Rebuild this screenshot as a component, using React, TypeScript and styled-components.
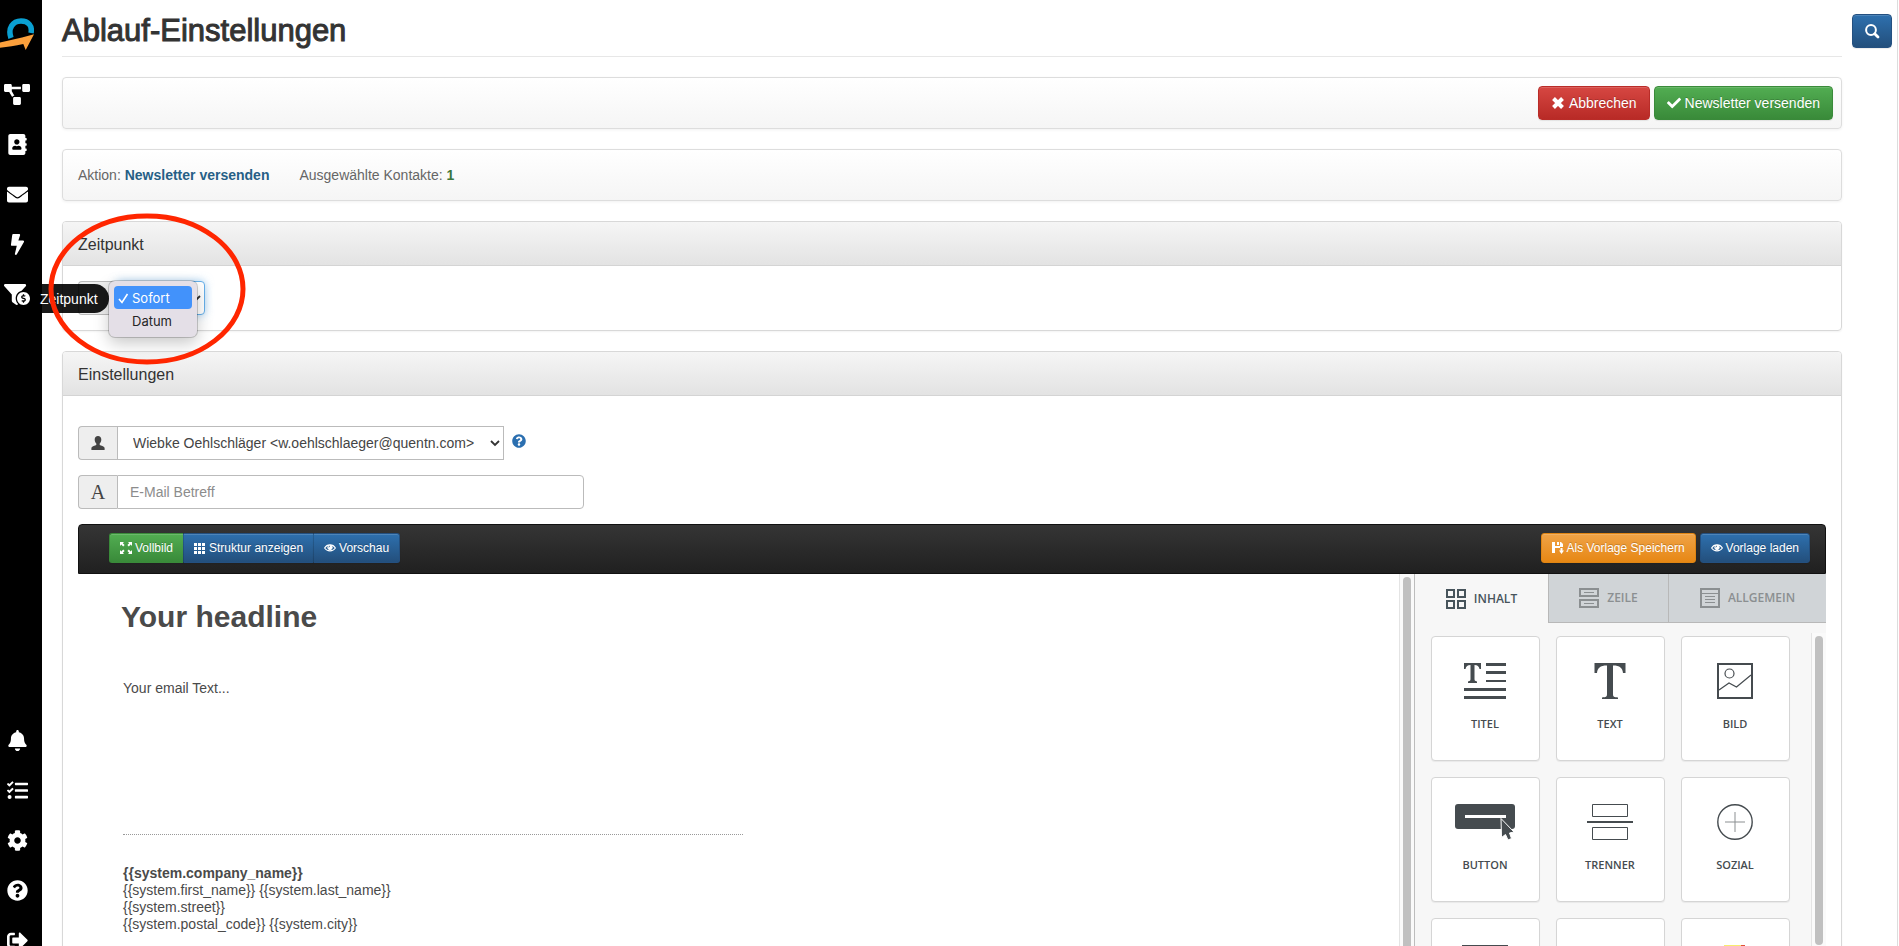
import React from 'react';
import styled, { createGlobalStyle, css } from 'styled-components';
import {
  FaAddressBook,
  FaBell,
  FaBolt,
  FaCheck,
  FaCog,
  FaEnvelope,
  FaFunnelDollar,
  FaProjectDiagram,
  FaQuestionCircle,
  FaSignOutAlt,
  FaTasks,
  FaTimes,
} from 'react-icons/fa';

const sans = `"Liberation Sans", Arial, Helvetica, sans-serif`;
const ink = '#454b4f';

const GlobalStyle = createGlobalStyle`
  *, *::before, *::after { box-sizing: border-box; }
  html, body { margin: 0; height: 100%; }
  body {
    background: #fff;
    color: #333;
    font: 14px/20px ${sans};
    overflow: hidden;
  }
  button, input, select { font: inherit; }
  h1, h2, p, ul { margin: 0; padding: 0; }
`;

/* ---------- page frame ---------- */

const Shell = styled.div`
  display: flex;
  height: 100vh;
  overflow: hidden;
`;

const Sidebar = styled.nav`
  flex: none;
  width: 42px;
  background: #000;
  display: flex;
  flex-direction: column;
`;

const SideGroup = styled.ul<{ $bottom?: boolean }>`
  list-style: none;
  flex: none;
  ${(p) => p.$bottom && 'margin-top: auto; margin-bottom: -19px;'}
`;

const SideLink = styled.a<{ $wide?: boolean }>`
  position: relative;
  display: flex;
  align-items: center;
  justify-content: center;
  width: 34px;
  height: 50px;
  color: #fff;
  svg { flex: none; display: block; width: ${(p) => (p.$wide ? 26 : 21)}px; height: 21px; }
`;

const Brand = styled.a`
  flex: none;
  display: block;
  height: 69px;
  padding-top: 17px;
  svg { display: block; }
`;

const Tooltip = styled.span`
  position: absolute;
  z-index: 3;
  left: 34px;
  top: 15px;
  height: 29px;
  padding: 0 11px 0 6px;
  border-radius: 0 15px 15px 0;
  background: rgba(0, 0, 0, 0.9);
  color: #fff;
  font-size: 14px;
  line-height: 30px;
`;

const Main = styled.main`
  flex: 1;
  min-width: 0;
  display: flex;
  align-items: flex-start;
  padding: 0 5px 0 20px;
  border-right: 1px solid #ddd;
  margin-right: 1px;
`;

const Column = styled.div`
  flex: 1;
  min-width: 0;
`;

const PageHeader = styled.header`
  height: 57px;
  padding-top: 13px;
  margin-bottom: 20px;
  border-bottom: 1px solid #e7e7e7;
`;

const Title = styled.h1`
  font-size: 31px;
  line-height: 36px;
  font-weight: 500;
  -webkit-text-stroke: 1px #333;
`;

const SearchSlot = styled.div`
  flex: none;
  padding: 14px 0 0 10px;
`;

/* ---------- buttons ---------- */

type Tone = 'red' | 'green' | 'blue' | 'orange';

/* gradient top, gradient bottom, border */
const tones: Record<Tone, [string, string, string]> = {
  red: ['#d64742', '#b82a26', '#b92c28'],
  green: ['#52ad52', '#398a39', '#3a8a3a'],
  blue: ['#2e70ae', '#234f7c', '#245080'],
  orange: ['#efa347', '#e78714', '#e08513'],
};

const Button = styled.button<{ $tone: Tone; $small?: boolean }>`
  display: inline-flex;
  align-items: center;
  justify-content: center;
  gap: ${(p) => (p.$small ? 3 : 4)}px;
  height: ${(p) => (p.$small ? 30 : 34)}px;
  padding: 0 ${(p) => (p.$small ? 10 : 12)}px;
  border: 1px solid ${(p) => tones[p.$tone][2]};
  border-radius: ${(p) => (p.$small ? 3 : 4)}px;
  background: linear-gradient(${(p) => tones[p.$tone][0]}, ${(p) => tones[p.$tone][1]});
  box-shadow: inset 0 1px 0 rgba(255, 255, 255, 0.15), 0 1px 1px rgba(0, 0, 0, 0.08);
  color: #fff;
  font-size: ${(p) => (p.$small ? 12 : 14)}px;
  text-shadow: 0 -1px 0 rgba(0, 0, 0, 0.2);
  white-space: nowrap;
  svg { flex: none; display: block; }
`;

const SearchButton = styled(Button)`
  width: 40px;
  padding: 0;
`;

const ButtonGroup = styled.div`
  display: flex;
  button:not(:first-child) { border-top-left-radius: 0; border-bottom-left-radius: 0; border-left-color: rgba(0, 0, 0, 0.15); }
  button:not(:last-child) { border-top-right-radius: 0; border-bottom-right-radius: 0; border-right-width: 0; }
`;

const ButtonRow = styled.div`
  display: flex;
  gap: 4px;
`;

/* ---------- panels ---------- */

const Bar = styled.div<{ $end?: boolean }>`
  display: flex;
  align-items: center;
  gap: 30px;
  height: 52px;
  padding: 0 ${(p) => (p.$end ? 8 : 15)}px;
  margin-bottom: 20px;
  justify-content: ${(p) => (p.$end ? 'flex-end' : 'flex-start')};
  border: 1px solid #ddd;
  border-radius: 4px;
  background: linear-gradient(#fff, #f5f5f5);
  box-shadow: 0 1px 3px rgba(0, 0, 0, 0.06);
  color: #666;
`;

const Strong = styled.strong<{ $green?: boolean }>`
  color: ${(p) => (p.$green ? '#3c763d' : '#265f86')};
`;

const Panel = styled.section`
  margin-bottom: 20px;
  border: 1px solid #d8d8d8;
  border-radius: 4px;
  box-shadow: 0 1px 2px rgba(0, 0, 0, 0.05);
`;

const PanelTitle = styled.h2`
  height: 44px;
  padding: 0 15px;
  border-bottom: 1px solid #d4d4d4;
  border-radius: 3px 3px 0 0;
  background: linear-gradient(#f5f5f5, #e3e3e3);
  font-size: 16px;
  font-weight: 400;
  line-height: 46px;
`;

const PanelBody = styled.div<{ $roomy?: boolean }>`
  padding: ${(p) => (p.$roomy ? '30px 15px 0' : '15px')};
`;

/* ---------- form ---------- */

const Field = styled.div<{ $width: number }>`
  position: relative;
  display: flex;
  width: ${(p) => p.$width}px;
  height: 34px;
`;

const FieldRow = styled.div`
  display: flex;
  gap: 8px;
  margin-bottom: 15px;
`;

const Addon = styled.label`
  flex: none;
  display: flex;
  align-items: center;
  justify-content: center;
  width: 39px;
  border: 1px solid #bbb;
  border-right: 0;
  border-radius: 4px 0 0 4px;
  background: #eee;
  color: #444;
`;

const control = css`
  flex: 1;
  min-width: 0;
  height: 34px;
  border: 1px solid #bbb;
  background: #fff;
  color: #444;
  outline: 0;
`;

const Select = styled.select<{ $focus?: boolean }>`
  ${control}
  appearance: none;
  padding: 0 15px;
  border-radius: 0;
  ${(p) =>
    p.$focus &&
    css`
      border-color: #66afe9;
      border-radius: 0 4px 4px 0;
      box-shadow: 0 0 8px rgba(102, 175, 233, 0.6);
    `}
`;

const Chevron = styled.svg`
  position: absolute;
  right: 4px;
  top: 14px;
  pointer-events: none;
`;

const Input = styled.input`
  ${control}
  padding: 0 12px;
  border-radius: 0 4px 4px 0;
  &::placeholder { color: #8c8c8c; opacity: 1; }
`;

const Letter = styled.span`
  font: 20px/20px "Liberation Serif", "Times New Roman", serif;
`;

const HelpLink = styled.a`
  color: #2b6fb0;
  padding-top: 8px;
  height: 22px;
  svg { display: block; }
`;

const Menu = styled.ul`
  position: absolute;
  z-index: 2;
  left: 31px;
  top: 0;
  width: 88px;
  padding: 5px;
  border-radius: 6px;
  list-style: none;
  background: #e4dfe7;
  box-shadow: 0 0 0 1px rgba(0, 0, 0, 0.18), 0 6px 16px rgba(0, 0, 0, 0.22);
`;

const MenuItem = styled.li<{ $active?: boolean }>`
  position: relative;
  height: 23px;
  padding-left: 18px;
  border-radius: 4px;
  font: 400 13px/24px Inter, ${sans};
  color: ${(p) => (p.$active ? '#fff' : '#262626')};
  background: ${(p) => (p.$active ? '#4292fb' : 'transparent')};
  svg { position: absolute; left: 4px; top: 7px; }
`;

const Marker = styled.svg`
  position: absolute;
  z-index: 4;
  left: -32px;
  top: -70px;
  pointer-events: none;
`;

/* ---------- mail editor ---------- */

const Toolbar = styled.div`
  display: flex;
  justify-content: space-between;
  align-items: flex-start;
  height: 50px;
  padding: 8px 15px 0 30px;
  border: 1px solid #111;
  border-radius: 4px 4px 0 0;
  background: linear-gradient(#353535, #202020);
`;

const Editor = styled.div`
  display: flex;
  height: 560px;
`;

const Canvas = styled.article`
  flex: 1;
  min-width: 0;
  padding: 0 43px 0 45px;
  color: #4a4a4a;
`;

const Headline = styled.h2`
  padding: 22px 0 0;
  margin-left: -2px;
  font-size: 30px;
  line-height: 42px;
  font-weight: 700;
`;

const MailText = styled.p`
  padding: 40px 0 136px;
`;

const Signature = styled.address`
  width: 620px;
  max-width: 100%;
  padding-top: 30px;
  border-top: 1px dotted #999;
  font-style: normal;
  line-height: 17px;
`;

const Track = styled.div<{ $wide?: boolean }>`
  flex: none;
  width: 15px;
  padding: 3px 0 0 3px;
  border-left: 1px solid #e4e4e4;
  background: #fafafa;
  &::before {
    content: '';
    display: block;
    width: 8px;
    height: ${(p) => (p.$wide ? 470 : 309)}px;
    border-radius: 4px;
    background: #c0c0c0;
  }
`;

const Tools = styled.aside`
  flex: none;
  width: 412px;
  border-left: 1px solid #bdbdbd;
  background: #f7f7f7;
  font-family: "Open Sans", "Noto Sans", sans-serif;
`;

const Tabs = styled.div`
  display: grid;
  grid-template-columns: 133px 120px 1fr;
  height: 49px;
`;

const Tab = styled.button<{ $active?: boolean }>`
  display: flex;
  align-items: center;
  justify-content: center;
  gap: 8px;
  padding: 0;
  border: 0;
  border-left: ${(p) => (p.$active ? 0 : '1px solid #b8b8b8')};
  border-bottom: ${(p) => (p.$active ? 0 : '1px solid #b8b8b8')};
  background: ${(p) => (p.$active ? '#f7f7f7' : '#d0d4d7')};
  color: ${(p) => (p.$active ? '#47545b' : '#8b8f91')};
  font-size: 12px;
  font-weight: 600;
`;

const ToolsBody = styled.div`
  display: flex;
  justify-content: space-between;
  padding-top: 10px;
  height: 511px;
`;

const Cards = styled.div`
  display: grid;
  grid-template-columns: repeat(3, 109px);
  grid-auto-rows: 125px;
  gap: 16px;
  padding: 3px 0 0 16px;
`;

const Card = styled.button`
  display: flex;
  flex-direction: column;
  align-items: center;
  padding: 25px 1px 0 0;
  border: 1px solid #d5d5d5;
  border-radius: 4px;
  background: #fff;
  box-shadow: 0 1px 1px rgba(0, 0, 0, 0.06);
  color: ${ink};
  font-size: 11px;
  line-height: 16px;
  font-weight: 600;
  svg { display: block; margin-bottom: 16px; }
`;

/* ---------- drawings ---------- */

const Logo = () => (
  <svg width="34" height="34" viewBox="0 0 34 34">
    <path d="M11 21C7.500 11 13 4 21 4C28.500 4 32.500 9 31 16" fill="none" stroke="#0aa0d2" strokeWidth="5.500" />
    <path d="M0 25.500L22 20.500L34 17.300L25.700 33L23.300 27C15 29 8 29.800 0 30.700Z" fill="#fba03c" />
  </svg>
);

const SearchIcon = () => (
  <svg width="16" height="16" viewBox="0 0 16 16" fill="none" stroke="#fff">
    <circle cx="7" cy="7" r="4.900" strokeWidth="2" />
    <path d="M10.700 10.700L14 14" strokeWidth="2.800" strokeLinecap="round" />
  </svg>
);

const UserIcon = () => (
  <svg width="14" height="14" viewBox="0 0 14 14" fill="currentColor">
    <path d="M7 0C9 0 10.300 1.300 10.300 3.600C10.300 5.300 9.700 6.700 8.700 7.500V9C10 9.800 13 10.300 13.600 11.700V14H.4V11.700C1 10.300 4 9.800 5.300 9V7.500C4.300 6.700 3.700 5.300 3.700 3.600C3.700 1.300 5 0 7 0Z" />
  </svg>
);

const CrossIcon = () => (
  <svg width="14" height="14" viewBox="0 0 14 14" fill="none" stroke="#fff" strokeWidth="4">
    <path d="M2.500 2.500L11.500 11.500M11.500 2.500L2.500 11.500" />
  </svg>
);

const FullscreenIcon = () => (
  <svg width="12" height="12" viewBox="0 0 12 12" fill="#fff">
    <path d="M0 0H4L2.800 1.200L4.600 3L3.200 4.400L1.300 2.600L0 4ZM12 0H8L9.200 1.200L7.400 3L8.800 4.400L10.700 2.600L12 4ZM0 12H4L2.800 10.800L4.600 9L3.200 7.600L1.300 9.400L0 8ZM12 12H8L9.200 10.800L7.400 9L8.800 7.600L10.700 9.400L12 8Z" />
  </svg>
);

const GridIcon = () => (
  <svg width="12" height="12" viewBox="0 0 12 12" fill="#fff">
    {[1, 5, 9].map((y) => [0, 4, 8].map((x) => <rect key={`${x}-${y}`} x={x} y={y} width="3" height="3" />))}
  </svg>
);

const EyeIcon = () => (
  <svg width="12" height="12" viewBox="0 0 12 12" fill="none" stroke="#fff">
    <path d="M.6 6C3 1.800 9 1.800 11.400 6C9 9.800 3 9.800 .6 6Z" strokeWidth="1.100" />
    <circle cx="6" cy="5.400" r="2.200" fill="#fff" />
    <path d="M4.800 5.400A1.300 1.300 0 0 1 6 4.100" stroke="#245580" strokeWidth=".8" />
  </svg>
);

const SaveIcon = () => (
  <svg width="12" height="12" viewBox="0 0 12 12" fill="#fff">
    <path fillRule="evenodd" d="M0 0H3V4H8V0H9L11 2V5H8V6H3V11H0ZM5 0H7V3H5Z" />
    <path d="M8.500 6H10.500V8.500H12L9.500 12L7 8.500H8.500Z" />
  </svg>
);

const ContentTabIcon = () => (
  <svg width="20" height="20" viewBox="0 0 20 20" fill="none" stroke="currentColor" strokeWidth="2">
    <path d="M1 1H8V8H1ZM12 1H19V8H12ZM1 12H8V19H1ZM12 12H19V19H12Z" />
  </svg>
);

const RowTabIcon = () => (
  <svg width="20" height="20" viewBox="0 0 20 20" fill="none" stroke="currentColor">
    <path d="M1 1H19V8H1ZM1 12H19V19H1Z" strokeWidth="2" />
    <path d="M5 4.500H15M5 15.500H15" />
  </svg>
);

const GeneralTabIcon = () => (
  <svg width="20" height="20" viewBox="0 0 20 20" fill="none" stroke="currentColor">
    <path d="M1 1H19V19H1Z" strokeWidth="2" />
    <path d="M1 5.500H19M5 8.500H15M5 11.500H15M5 14.500H15" />
  </svg>
);

const TitleArt = () => (
  <svg width="42" height="38" viewBox="0 0 42 38" fill={ink}>
    <path d="M0 1H17V7H15.500C15 4.500 13.500 3 10.500 3V17C10.500 18.500 11 19 13 19.500V21H4V19.500C6 19 6.500 18.500 6.500 17V3C3.500 3 2 4.500 1.500 7H0Z" />
    <path d="M22 1H42V4H22ZM22 9H42V12H22ZM22 18H42V20H22ZM0 26H42V29H0ZM0 34H42V37H0Z" />
  </svg>
);

const TextArt = () => (
  <svg width="32" height="38" viewBox="0 0 32 38" fill={ink}>
    <path d="M.5 1H31.500V11H29C28.500 6 26 3.500 19 3.500V32C19 35 20 35 24 35.500V37H8V35.500C12 35 13 35 13 32V3.500C6 3.500 3.500 6 3 11H.5Z" />
  </svg>
);

const ImageArt = () => (
  <svg width="36" height="38" viewBox="0 0 36 38" fill="none" stroke={ink}>
    <path d="M1 2H35V36H1Z" strokeWidth="2" />
    <circle cx="12.500" cy="11.500" r="4.500" strokeWidth="1.200" />
    <path d="M2 28L12 21L19.500 25L34 13" strokeWidth="1.200" />
  </svg>
);

const ButtonArt = () => (
  <svg width="60" height="38" viewBox="0 0 60 38">
    <rect y="1" width="60" height="25" rx="3" fill={ink} />
    <path d="M10 12H51V15H10Z" fill="#fff" />
    <path d="M46 15.500L59 29L54.500 30L56.500 35.500L53 37L50.500 31.500L46.500 34.500Z" fill={ink} stroke="#fff" strokeWidth="1" />
  </svg>
);

const DividerArt = () => (
  <svg width="46" height="38" viewBox="0 0 46 38" fill="none" stroke={ink}>
    <path d="M5.500 1.500H40.500V13.500H5.500ZM5.500 24.500H40.500V36.500H5.500Z" />
    <path d="M0 19H46" strokeWidth="2" />
  </svg>
);

const SocialArt = () => (
  <svg width="36" height="38" viewBox="0 0 36 38" fill="none" stroke={ink}>
    <circle cx="18" cy="19" r="17.200" strokeWidth="1.400" />
    <path d="M8 19H28M18 9V29" stroke="#8b8f91" />
  </svg>
);

const HtmlArt = () => (
  <svg width="46" height="38" viewBox="0 0 46 38" fill="none" stroke={ink} strokeWidth="2">
    <path d="M1 2H45V36H1ZM1 10H45" />
  </svg>
);

const BlankArt = () => <svg width="46" height="38" />;

const StickerArt = () => (
  <svg width="24" height="38" viewBox="0 0 24 38">
    <path d="M1 1H18V36H1Z" fill="#f7ec6e" />
    <path d="M18 1H22V8L18 6Z" fill="#e0503a" />
  </svg>
);

const SelectChevron = () => (
  <Chevron width="10" height="7" viewBox="0 0 10 7" fill="none" stroke="#333" strokeWidth="1.800">
    <path d="M1 1L5 5L9 1" />
  </Chevron>
);

/* ---------- data ---------- */

const topLinks = [
  { label: 'Kampagnen', icon: <FaProjectDiagram />, wide: true },
  { label: 'Kontakte', icon: <FaAddressBook /> },
  { label: 'E-Mails', icon: <FaEnvelope /> },
  { label: 'Aktionen', icon: <FaBolt /> },
  { label: 'Verkauf', icon: <FaFunnelDollar />, wide: true, tip: 'Zeitpunkt' },
];

const bottomLinks = [
  { label: 'Benachrichtigungen', icon: <FaBell /> },
  { label: 'Aufgaben', icon: <FaTasks /> },
  { label: 'Einstellungen', icon: <FaCog /> },
  { label: 'Hilfe', icon: <FaQuestionCircle /> },
  { label: 'Abmelden', icon: <FaSignOutAlt /> },
];

const cards = [
  { label: 'TITEL', art: <TitleArt /> },
  { label: 'TEXT', art: <TextArt /> },
  { label: 'BILD', art: <ImageArt /> },
  { label: 'BUTTON', art: <ButtonArt /> },
  { label: 'TRENNER', art: <DividerArt /> },
  { label: 'SOZIAL', art: <SocialArt /> },
  { label: '', art: <HtmlArt /> },
  { label: '', art: <BlankArt /> },
  { label: '', art: <StickerArt /> },
];

export default function App() {
  return (
    <>
      <GlobalStyle />
      <Shell>
        <Sidebar>
          <Brand href="#" aria-label="Startseite"><Logo /></Brand>
          <SideGroup>
            {topLinks.map((l) => (
              <li key={l.label}>
                <SideLink href="#" aria-label={l.label} $wide={l.wide}>
                  {l.icon}
                  {l.tip && <Tooltip>{l.tip}</Tooltip>}
                </SideLink>
              </li>
            ))}
          </SideGroup>
          <SideGroup $bottom>
            {bottomLinks.map((l) => (
              <li key={l.label}>
                <SideLink href="#" aria-label={l.label}>{l.icon}</SideLink>
              </li>
            ))}
          </SideGroup>
        </Sidebar>

        <Main>
          <Column>
            <PageHeader><Title>Ablauf-Einstellungen</Title></PageHeader>

            <Bar $end>
              <ButtonRow>
                <Button $tone="red"><CrossIcon />Abbrechen</Button>
                <Button $tone="green"><FaCheck size={14} />Newsletter versenden</Button>
              </ButtonRow>
            </Bar>

            <Bar>
              <span>Aktion: <Strong>Newsletter versenden</Strong></span>
              <span>Ausgewählte Kontakte: <Strong $green>1</Strong></span>
            </Bar>

            <Panel>
              <PanelTitle>Zeitpunkt</PanelTitle>
              <PanelBody>
                <Field $width={127}>
                  <Addon htmlFor="when" />
                  <Select id="when" $focus aria-label="Zeitpunkt">
                    <option value="now" aria-label="Sofort" />
                  </Select>
                  <SelectChevron />
                  <Menu>
                    <MenuItem $active>
                      <svg width="11" height="11" viewBox="0 0 11 11" fill="none" stroke="#fff" strokeWidth="1.600">
                        <path d="M1 6L4 9.500L9.500 1" />
                      </svg>
                      Sofort
                    </MenuItem>
                    <MenuItem>Datum</MenuItem>
                  </Menu>
                  <Marker width="202" height="156" viewBox="0 0 202 156" fill="none">
                    <ellipse cx="101" cy="78" rx="96" ry="73" stroke="#ff2600" strokeWidth="5" />
                  </Marker>
                </Field>
              </PanelBody>
            </Panel>

            <Panel>
              <PanelTitle>Einstellungen</PanelTitle>
              <PanelBody $roomy>
                <FieldRow>
                  <Field $width={426}>
                    <Addon htmlFor="sender" aria-label="Absender"><UserIcon /></Addon>
                    <Select id="sender">
                      <option>Wiebke Oehlschläger &lt;w.oehlschlaeger@quentn.com&gt;</option>
                    </Select>
                    <SelectChevron />
                  </Field>
                  <HelpLink href="#" aria-label="Hilfe zum Absender"><FaQuestionCircle size={14} /></HelpLink>
                </FieldRow>
                <FieldRow>
                  <Field $width={506}>
                    <Addon htmlFor="subject"><Letter>A</Letter></Addon>
                    <Input id="subject" placeholder="E-Mail Betreff" />
                  </Field>
                </FieldRow>

                <Toolbar>
                  <ButtonGroup>
                    <Button $tone="green" $small><FullscreenIcon />Vollbild</Button>
                    <Button $tone="blue" $small><GridIcon />Struktur anzeigen</Button>
                    <Button $tone="blue" $small><EyeIcon />Vorschau</Button>
                  </ButtonGroup>
                  <ButtonRow>
                    <Button $tone="orange" $small><SaveIcon />Als Vorlage Speichern</Button>
                    <Button $tone="blue" $small><EyeIcon />Vorlage laden</Button>
                  </ButtonRow>
                </Toolbar>

                <Editor>
                  <Canvas>
                    <Headline>Your headline</Headline>
                    <MailText>Your email Text...</MailText>
                    <Signature>
                      <strong>{'{{system.company_name}}'}</strong><br />
                      {'{{system.first_name}} {{system.last_name}}'}<br />
                      {'{{system.street}}'}<br />
                      {'{{system.postal_code}} {{system.city}}'}
                    </Signature>
                  </Canvas>
                  <Track $wide />
                  <Tools>
                    <Tabs>
                      <Tab $active><ContentTabIcon />INHALT</Tab>
                      <Tab><RowTabIcon />ZEILE</Tab>
                      <Tab><GeneralTabIcon />ALLGEMEIN</Tab>
                    </Tabs>
                    <ToolsBody>
                      <Cards>
                        {cards.map((c, i) => (
                          <Card key={i}>{c.art}{c.label}</Card>
                        ))}
                      </Cards>
                      <Track />
                    </ToolsBody>
                  </Tools>
                </Editor>
              </PanelBody>
            </Panel>
          </Column>
          <SearchSlot>
            <SearchButton $tone="blue" aria-label="Suchen"><SearchIcon /></SearchButton>
          </SearchSlot>
        </Main>
      </Shell>
    </>
  );
}
